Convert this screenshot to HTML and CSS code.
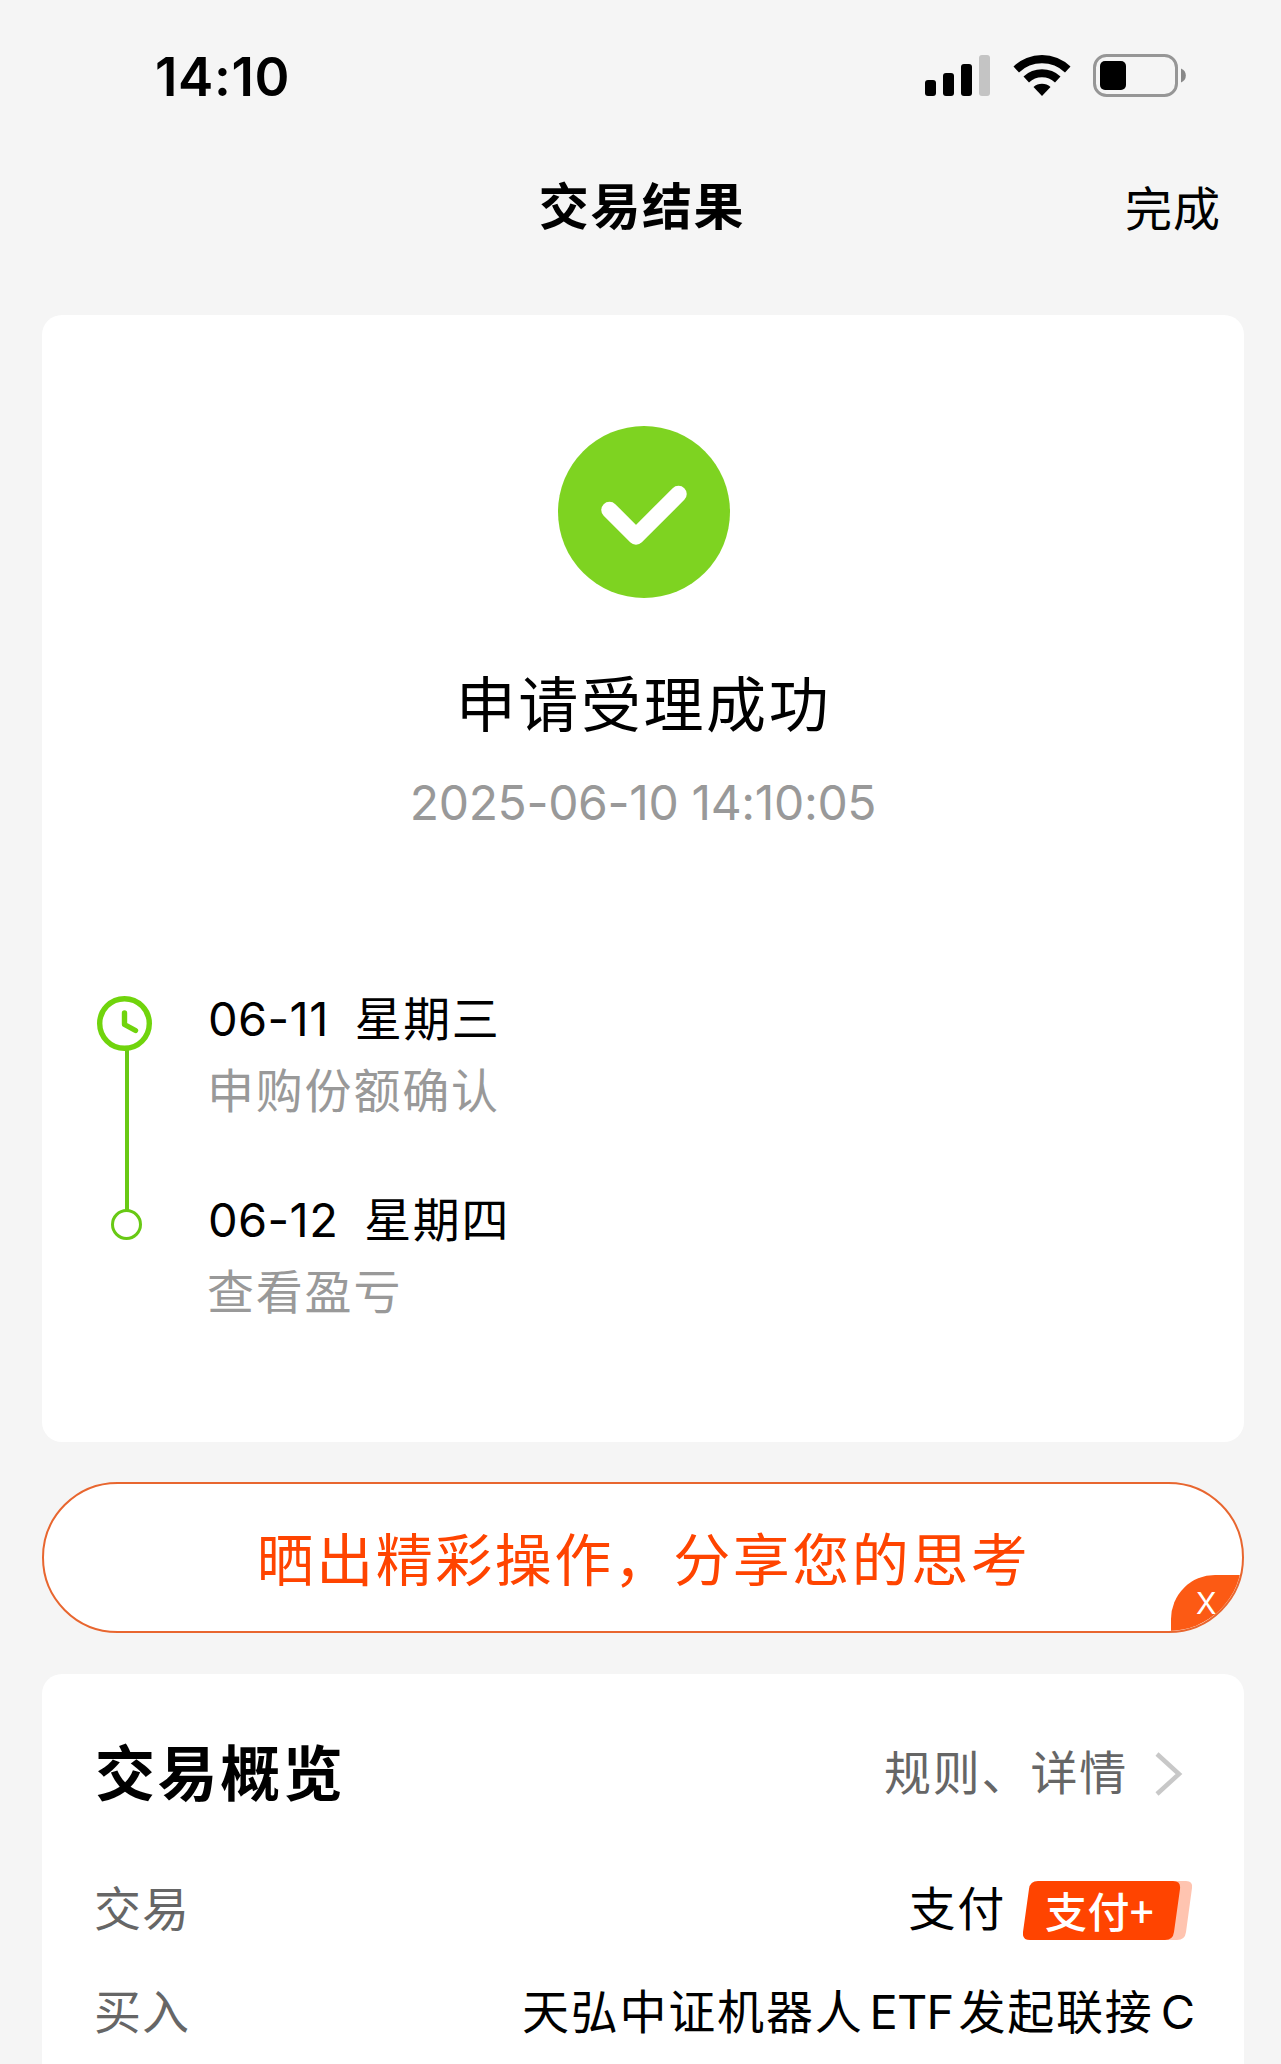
FILE: index.html
```html
<!DOCTYPE html>
<html lang="zh-CN">
<head>
    <meta charset="utf-8">
    <title>交易结果</title>
    <link rel="stylesheet" href="styles.css">
</head>
<body>
    <div class="status-bar">
        <span class="time">14:10</span>
        <div class="status-icons">
            <svg class="signal" width="65" height="41" viewBox="0 0 65 41">
                <rect x="0" y="25" width="11" height="16" rx="3"/>
                <rect x="18" y="18" width="11" height="23" rx="3"/>
                <rect x="36" y="9" width="11" height="32" rx="3"/>
                <rect x="54" y="0" width="11" height="41" rx="3" fill="#c4c4c4"/>
            </svg>
            <svg class="wifi" width="58" height="42" viewBox="0 0 58 42">
                <path d="M0.5 12.5 A41 41 0 0 1 57.5 12.5 L52 18.5 A33 33 0 0 0 6 18.5 Z"/>
                <path d="M10.5 22.5 A27 27 0 0 1 47.5 22.5 L42 28.5 A19 19 0 0 0 16 28.5 Z"/>
                <path d="M20.5 33 A13 13 0 0 1 37.5 33 L29 42 Z"/>
            </svg>
            <svg class="battery" width="95" height="43" viewBox="0 0 95 43">
                <rect x="1.5" y="1.5" width="82" height="40" rx="12" fill="none" stroke="#969696" stroke-width="3"/>
                <rect x="7" y="7" width="26" height="29" rx="5"/>
                <path d="M88 14.5 A7.5 7.5 0 0 1 88 28.5 Z" fill="#888"/>
            </svg>
        </div>
    </div>

    <div class="nav">
        <h1 class="nav-title">交易结果</h1>
        <a class="nav-done">完成</a>
    </div>

    <div class="card result">
        <svg class="success" width="172" height="172" viewBox="0 0 172 172">
            <circle cx="86" cy="86" r="86" fill="#7ed321"/>
            <path d="M51.5 84 L78 110.5 L120.5 68" fill="none" stroke="#fff" stroke-width="16.5" stroke-linecap="round" stroke-linejoin="round"/>
        </svg>
        <h2 class="result-title">申请受理成功</h2>
        <p class="result-time">2025-06-10 14:10:05</p>

        <div class="timeline">
            <svg class="rail" width="55" height="245" viewBox="0 0 55 245">
                <path d="M30 53 V214" stroke="#68c914" stroke-width="4"/>
                <circle cx="27.5" cy="27.5" r="24.8" fill="#fff" stroke="#70d40c" stroke-width="5.4"/>
                <path d="M27.5 17 V28.5 L38.5 34.5" fill="none" stroke="#70d40c" stroke-width="5.4" stroke-linecap="round" stroke-linejoin="round"/>
                <circle cx="29.5" cy="228.5" r="14" fill="#fff" stroke="#68c914" stroke-width="3"/>
            </svg>
            <div class="steps">
                <div class="step">
                    <p class="step-date"><span>06-11</span><span>星期三</span></p>
                    <p class="step-text">申购份额确认</p>
                </div>
                <div class="step">
                    <p class="step-date"><span>06-12</span><span>星期四</span></p>
                    <p class="step-text">查看盈亏</p>
                </div>
            </div>
        </div>
    </div>

    <div class="share">
        <span class="share-text">晒出精彩操作，分享您的思考</span>
        <span class="share-close">X</span>
    </div>

    <div class="card overview">
        <div class="overview-head">
            <h2 class="overview-title">交易概览</h2>
            <a class="rules"><span>规则、详情</span>
                <svg width="30" height="46" viewBox="0 0 30 46">
                    <path d="M3 3 L25 23 L3 43" fill="none" stroke="#c8c8c8" stroke-width="4.5"/>
                </svg>
            </a>
        </div>
        <div class="row pay">
            <span class="label">交易</span>
            <span class="value"><span>支付</span>
                <span class="badge">
                    <svg width="170" height="59" viewBox="0 0 170 59">
                        <path d="M140 0 H163 Q170 0 169 7 L163 51 Q162 59 154 59 H140 Z" fill="#ffc4b0"/>
                        <path d="M15 0 H150 Q158 0 157 8 L151 51 Q150 59 142 59 H7 Q-1 59 0 51 L6 8 Q7 0 15 0 Z" fill="#ff4400"/>
                    </svg>
                    <span class="badge-text">支付+</span>
                </span>
            </span>
        </div>
        <div class="row">
            <span class="label">买入</span>
            <span class="value fund"><span>天弘中证机器人<span class="latin">ETF</span>发起联接<span class="latin-end">C</span></span></span>
        </div>
    </div>
</body>
</html>
```

FILE: styles.css
```css
* {box-sizing: border-box;}
body {
    margin: 0;
    height: 2064px;
    overflow: hidden;
    background-color: #f5f5f5;
    color: #000;
    font-family: Inter, "Noto Sans CJK SC", sans-serif;
    font-size: 47px;}
h1, h2, p {margin: 0; font-weight: 400;}
svg {display: block; flex: none;}

/* status bar */
.status-bar {
    display: flex;
    justify-content: space-between;
    align-items: center;
    height: 154px;
    padding: 0 93px 0 155px;}
.time {font-size: 53px; font-weight: 600; line-height: 60px; letter-spacing: 0.6px;}
.status-icons {display: flex; align-items: flex-end; height: 43px; margin-bottom: 3px;}
.signal {margin-bottom: 1px;}
.wifi {margin: 0 22px 1px 23px;}

/* title bar */
.nav {
    display: grid;
    grid-template-columns: 1fr auto 1fr;
    height: 161px;
    padding: 22px 60px 0 63px;
    line-height: 62px;}
.nav-title {grid-column: 2; font-size: 50px; font-weight: 700; letter-spacing: 1.6px;}
.nav-done {justify-self: end; padding-top: 2px; letter-spacing: 1px;}

.card {
    width: 1202px;
    margin-left: 42px;
    border-radius: 20px;
    background-color: #fff;}

/* result */
.result {
    display: flex;
    flex-direction: column;
    align-items: center;
    height: 1127px;
    padding-top: 111px;}
.success {margin-left: 2px;}
.result-title {
    margin: 67px 0 0 1px;
    font-size: 60px;
    line-height: 80px;
    letter-spacing: 2.6px;}
.result-time {
    margin-top: 28px;
    color: #999;
    font-size: 48px;
    line-height: 60px;
    letter-spacing: -0.35px;}
.timeline {
    display: flex;
    gap: 55px;
    align-self: stretch;
    margin-top: 151px;
    padding-left: 55px;}
.rail {margin-top: 12px;}
.step {margin-bottom: 59px; line-height: 70px;}
.step-date {display: flex; gap: 26px; padding-left: 1px; letter-spacing: 0.4px;}
.step-date span + span {letter-spacing: 1.6px;}
.step-text {margin-top: 2px; color: #999; letter-spacing: 1.8px;}

/* share button */
.share {
    position: relative;
    display: flex;
    justify-content: center;
    width: 1202px;
    height: 151px;
    margin: 40px 0 41px 42px;
    border: 2px solid #e8662f;
    border-radius: 76px;
    background-color: #fff;
    overflow: hidden;}
.share-text {
    padding-left: 1px;
    color: #ff4400;
    font-size: 57px;
    line-height: 153px;
    letter-spacing: 2.5px;}
.share-close {
    position: absolute;
    right: -2px;
    bottom: -2px;
    width: 73px;
    height: 58px;
    padding-left: 25px;
    border-top-left-radius: 44px;
    background-color: #fc5a14;
    color: #fff;
    font-size: 30px;
    font-weight: 400;
    line-height: 56px;}

/* overview */
.overview {height: 420px; padding: 59px 51px 0 53px; border-radius: 20px 20px 0 0;}
.overview-head {
    display: flex;
    justify-content: space-between;
    align-items: center;
    height: 72px;
    padding-right: 9px;}
.overview-title {font-size: 60px; font-weight: 700; letter-spacing: 2.6px;}
.rules {
    display: flex;
    align-items: center;
    gap: 26px;
    color: #666;
    letter-spacing: 1.8px;}
.rules svg {margin-top: 10px;}
.row {
    display: flex;
    justify-content: space-between;
    align-items: center;
    height: 103px;}
.pay {margin-top: 49px;}
.label {margin-left: -1px; color: #666; letter-spacing: 1px;}
.value {display: flex; align-items: center; letter-spacing: 1.8px;}
.fund {margin-right: -2px;}
.badge {position: relative; margin: 5px 0 -4px 17px;}
.badge-text {
    position: absolute;
    top: 0;
    left: 22px;
    color: #fff;
    font-family: "Noto Sans CJK SC", sans-serif;
    font-size: 42px;
    font-weight: 500;
    line-height: 57px;
    letter-spacing: 0.4px;
    white-space: nowrap;}
.latin {margin: 0 5px 0 6px; letter-spacing: -0.8px;}
.latin-end {margin-left: 7px; letter-spacing: 0;}
```
